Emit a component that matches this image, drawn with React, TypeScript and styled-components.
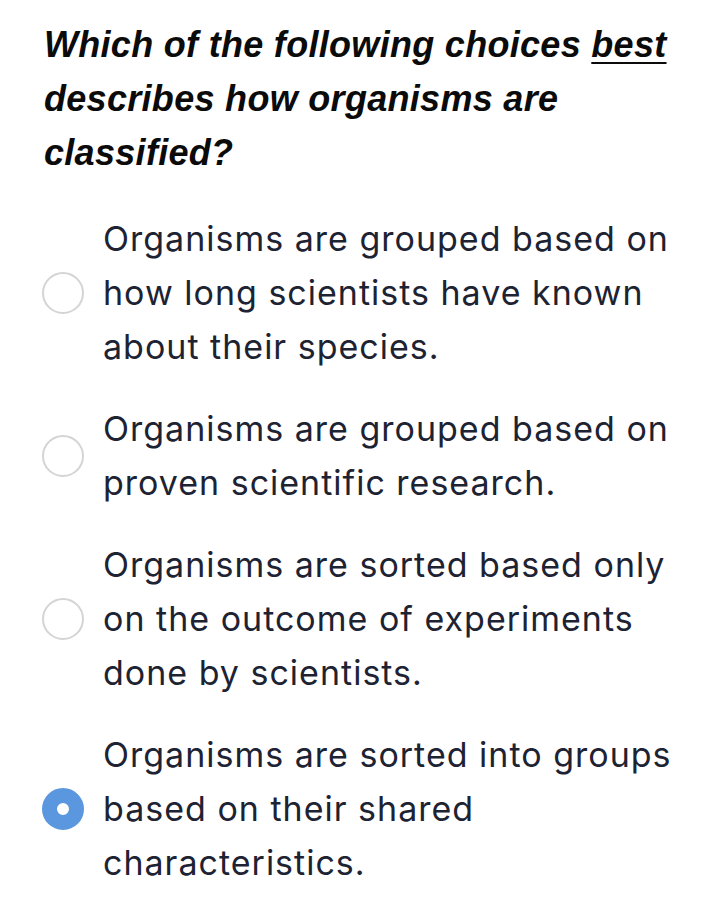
import React, { useState } from 'react'
import styled, { createGlobalStyle } from 'styled-components'

const GlobalStyle = createGlobalStyle`
  html, body {
    margin: 0;
    padding: 0;
    background: #ffffff;
  }
`

interface IChoice {
  id: string
  text: string
}

const choices: IChoice[] = [
  { id: 'a', text: 'Organisms are grouped based on how long scientists have known about their species.' },
  { id: 'b', text: 'Organisms are grouped based on proven scientific research.' },
  { id: 'c', text: 'Organisms are sorted based only on the outcome of experiments done by scientists.' },
  { id: 'd', text: 'Organisms are sorted into groups based on their shared characteristics.' },
]

export default function App () {
  const [selected, setSelected] = useState('d')

  return (
    <>
      <GlobalStyle />
      <StyledPage>
        <StyledQuestion>
          Which of the following choices <StyledEmphasis>best</StyledEmphasis> describes how organisms are classified?
        </StyledQuestion>
        <StyledChoiceList>
          {choices.map(choice => (
            <StyledChoice key={choice.id} onClick={() => setSelected(choice.id)}>
              <StyledRadio checked={selected === choice.id} />
              <StyledChoiceText>{choice.text}</StyledChoiceText>
            </StyledChoice>
          ))}
        </StyledChoiceList>
      </StyledPage>
    </>
  )
}

const StyledPage = styled.div`
  display: flex;
  flex-direction: column;
  gap: 32px;
  padding: 18px 30px 0 42px;
  width: 718px;
  box-sizing: border-box;
`

const StyledQuestion = styled.h1`
  margin: 0;
  padding-left: 2px;
  font-family: "Liberation Sans", Arial, sans-serif;
  font-weight: 700;
  font-style: italic;
  font-size: 36px;
  line-height: 54px;
  color: #0b0b0b;
  letter-spacing: 0.3px;
`

const StyledEmphasis = styled.span`
  text-decoration: underline;
  text-decoration-thickness: 2px;
  text-underline-offset: 5px;
`

const StyledChoiceList = styled.div`
  display: flex;
  flex-direction: column;
  gap: 28px;
`

const StyledChoice = styled.label`
  display: flex;
  align-items: center;
  gap: 19px;
  cursor: pointer;
`

const StyledRadio = styled.span<{ checked: boolean }>`
  flex: 0 0 auto;
  width: 42px;
  height: 42px;
  box-sizing: border-box;
  border-radius: 50%;
  border: ${({ checked }) => checked ? '15px solid #5a97df' : '2px solid #d4d4d6'};
  background: #ffffff;
`

const StyledChoiceText = styled.span`
  font-family: Inter, "Noto Sans", sans-serif;
  font-size: 34px;
  line-height: 54px;
  color: #1d2333;
  letter-spacing: 1px;
`
